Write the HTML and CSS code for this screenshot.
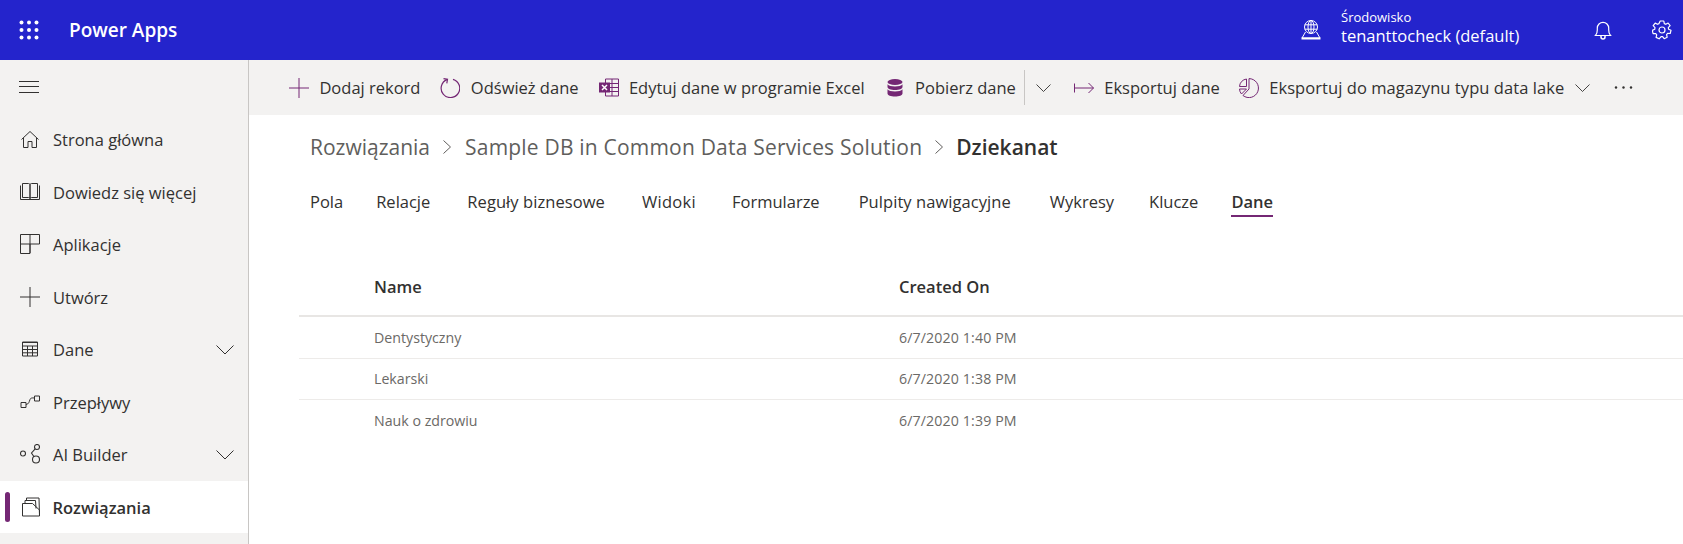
FILE: index.html
```html
<!DOCTYPE html>
<html lang="pl">
<head>
<meta charset="utf-8">
<title>Power Apps</title>
<link rel="stylesheet" href="styles.css">
</head>
<body>
<header class="topbar">
  <svg class="waffle" width="20" height="20" viewBox="0 0 20 20" fill="#fff"><circle cx="2.500" cy="2.500" r="2"/><circle cx="10" cy="2.500" r="2"/><circle cx="17.500" cy="2.500" r="2"/><circle cx="2.500" cy="10" r="2"/><circle cx="10" cy="10" r="2"/><circle cx="17.500" cy="10" r="2"/><circle cx="2.500" cy="17.500" r="2"/><circle cx="10" cy="17.500" r="2"/><circle cx="17.500" cy="17.500" r="2"/></svg>
  <div class="brand">Power Apps</div>
  <svg class="globe" width="20" height="20" viewBox="0 0 20 20" fill="none" stroke="#fff" stroke-width="1"><circle cx="10" cy="7" r="6.500"/><ellipse cx="10" cy="7" rx="3" ry="6.500"/><path d="M3.800 4.800h12.400M3.800 9.200h12.400M10 .5v13"/><path d="M4.500 12 1 18h18l-3.500-6"/><path d="M.5 18.500h19" stroke-width="2"/></svg>
  <div class="env">
    <div class="env-label">Środowisko</div>
    <div class="env-name">tenanttocheck (default)</div>
  </div>
  <svg class="bell" width="18" height="20" viewBox="0 0 18 20" fill="none" stroke="#fff" stroke-width="1.200"><path d="M1.500 15.500c1.400-1.500 1.800-3 1.800-5.500V8a5.700 5.700 0 0 1 11.400 0v2c0 2.500.4 4 1.800 5.500z"/><path d="M7 16v1a2 2 0 0 0 4 0v-1" stroke-width="1.500"/></svg>
  <svg class="gear" width="20" height="20" viewBox="0 0 20 20" fill="none" stroke="#fff" stroke-width="1.200"><circle cx="10" cy="10" r="3"/><path d="M8.200 1h3.600l.5 2.600 1.500.7 2.300-1.300 2 2.600-1.800 2 .3 1.600 2.400 1.100-.8 3.200-2.600-.1-1 1.300.6 2.600-3 1.400-1.600-2.100h-1.500L7.100 18.800l-3-1.400.6-2.600-1-1.300-2.600.1-.8-3.200 2.400-1.100.3-1.600-1.800-2 2-2.600L5.500 4.300 7 3.600z" stroke-linejoin="round"/></svg>
</header>

<div class="shell">
  <nav class="sidebar">
    <div class="hamburger">
      <svg width="20" height="12" viewBox="0 0 20 12" stroke="#323130" stroke-width="1"><path d="M0 .5h20M0 5.500h20M0 11.500h20"/></svg>
    </div>
    <a class="nav-item">
      <svg class="nav-icon" viewBox="0 0 20 20" fill="none" stroke="#323130"><path d="M1.500 10.500 10 2.500l8.500 8M3.500 9v9.500h4.500v-6h4v6h4.500V9"/></svg>
      <span>Strona główna</span>
    </a>
    <a class="nav-item">
      <svg class="nav-icon" viewBox="0 0 20 20" fill="none" stroke="#323130"><path d="M.5 3.500v14h19v-14M2.500 1.500h6c1 0 1.500.5 1.500 1.500v13.500c0-.7-.5-1-1.500-1h-6zM17.500 1.500h-6c-1 0-1.500.5-1.500 1.500v13.500c0-.7.500-1 1.500-1h6z"/></svg>
      <span>Dowiedz się więcej</span>
    </a>
    <a class="nav-item">
      <svg class="nav-icon" viewBox="0 0 20 20" fill="none" stroke="#323130"><path d="M.5.500h19v9.500h-9.500v9.500H.5zM10 .5V19M.5 10H10"/></svg>
      <span>Aplikacje</span>
    </a>
    <a class="nav-item">
      <svg class="nav-icon" viewBox="0 0 20 20" fill="none" stroke="#323130"><path d="M0 10h20M10 0v20"/></svg>
      <span>Utwórz</span>
    </a>
    <a class="nav-item">
      <svg class="nav-icon" viewBox="0 0 20 20" fill="none" stroke="#323130"><path d="M2.500 3h15v14h-15zM2.500 7h15M2.500 10.500h15M2.500 13.800h15M7.500 7v10M12.500 7v10M2.500 3.500h15" /></svg>
      <span>Dane</span>
      <svg class="nav-chev" width="18" height="10" viewBox="0 0 18 10" fill="none" stroke="#323130"><path d="M.5.500 9 9 17.500.5"/></svg>
    </a>
    <a class="nav-item">
      <svg class="nav-icon" viewBox="0 0 20 20" fill="none" stroke="#323130"><path d="M1 10.500h5v5H1zM14.500 4h5v5h-5zM6 12.500c3-.5 3-2.500 4-5 .5-1.500 2-1.800 4.500-1.500"/></svg>
      <span>Przepływy</span>
    </a>
    <a class="nav-item">
      <svg class="nav-icon" viewBox="0 0 20 20" fill="none" stroke="#323130" stroke-width="1.100"><circle cx="3" cy="9.500" r="2.500"/><circle cx="17" cy="3" r="2.500"/><circle cx="16" cy="15.500" r="3.500"/><path d="M15.200 4.800 11.500 9l2.500 3.700"/></svg>
      <span>AI Builder</span>
      <svg class="nav-chev" width="18" height="10" viewBox="0 0 18 10" fill="none" stroke="#323130"><path d="M.5.500 9 9 17.500.5"/></svg>
    </a>
    <a class="nav-item active">
      <svg class="nav-icon" viewBox="0 0 20 20" fill="none" stroke="#323130"><path d="M2.500 6.500h10l7 6.500v6H2.500zM5 6.500V3.500h10.500l.5 8M6.500 3.500V1h12.500l.5 18"/></svg>
      <span>Rozwiązania</span>
    </a>
  </nav>

  <main class="content">
    <div class="commands">
      <div class="cmd">
        <svg class="cmd-icon" viewBox="0 0 20 20" fill="none" stroke="#742774"><path d="M0 10h20M10 0v20"/></svg>
        <span>Dodaj rekord</span>
      </div>
      <div class="cmd">
        <svg class="cmd-icon" viewBox="0 0 20 20" fill="none" stroke="#742774" stroke-width="1.200"><path d="M7 1.600A9.300 9.300 0 1 0 13 1.300"/><path d="M3.500 .6 7.500 1.300 6.800 5.300"/></svg>
        <span>Odśwież dane</span>
      </div>
      <div class="cmd">
        <svg class="cmd-icon" viewBox="0 0 20 20" fill="none"><path d="M6.500 1h13v17h-13z" stroke="#742774"/><path d="M6.500 5.500h13M6.500 9.500h13M6.500 13.500h13M13 1v17" stroke="#742774"/><path d="M0 4.500h11v10H0z" fill="#742774"/><path d="M3 7l5 5M8 7l-5 5" stroke="#fff" stroke-width="1.500"/></svg>
        <span>Edytuj dane w programie Excel</span>
      </div>
      <div class="cmd">
        <svg class="cmd-icon" viewBox="0 0 20 20" fill="#742774"><ellipse cx="10" cy="4" rx="7.500" ry="3"/><path d="M2.500 6.300c1 1.500 4 2.200 7.500 2.200s6.500-.7 7.500-2.200v2.700c0 1.700-3.300 3-7.500 3s-7.500-1.300-7.500-3zM2.500 11.300c1 1.500 4 2.200 7.500 2.200s6.500-.7 7.500-2.200V15.500c0 1.700-3.300 3-7.500 3s-7.500-1.300-7.500-3z"/></svg>
        <span>Pobierz dane</span>
      </div>
      <div class="split">
        <span class="sep"></span>
        <svg width="15" height="8" viewBox="0 0 15 8" fill="none" stroke="#323130" stroke-width=".9"><path d="M.5.500 7.500 7.500 14.500.5"/></svg>
      </div>
      <div class="cmd cmd-export">
        <svg class="cmd-icon" viewBox="0 0 20 20" fill="none" stroke="#742774"><path d="M.5 5.500v9M1 10h18.500M14.500 5l5 5-5 5" /></svg>
        <span>Eksportuj dane</span>
      </div>
      <div class="cmd cmd-lake">
        <svg class="cmd-icon" viewBox="0 0 20 20" fill="none" stroke="#742774"><path d="M10 .6a9.500 9.500 0 1 1-6 16.900l6-6.500z"/><path d="M7.500 1v7.500H.5A8 8 0 0 1 7.500 1zM.5 11h7l-5 5a8 8 0 0 1-2-5z"/></svg>
        <span class="c-lake">Eksportuj do magazynu typu data lake</span>
        <svg width="15" height="8" viewBox="0 0 15 8" fill="none" stroke="#323130" stroke-width=".9"><path d="M.5.500 7.500 7.500 14.500.5"/></svg>
      </div>
      <svg class="more" width="19" height="3" viewBox="0 0 19 3" fill="#323130"><circle cx="2" cy="1.500" r="1.200"/><circle cx="9.500" cy="1.500" r="1.200"/><circle cx="17" cy="1.500" r="1.200"/></svg>
    </div>

    <div class="breadcrumb">
      <span>Rozwiązania</span>
      <svg width="8" height="14" viewBox="0 0 8 14" fill="none" stroke="#605e5c"><path d="M.5.500 7.500 7 .5 13.500"/></svg>
      <span class="b-db">Sample DB in Common Data Services Solution</span>
      <svg width="8" height="14" viewBox="0 0 8 14" fill="none" stroke="#605e5c"><path d="M.5.500 7.500 7 .5 13.500"/></svg>
      <strong class="b-cur">Dziekanat</strong>
    </div>

    <div class="tabs">
      <span class="tab t-pola">Pola</span>
      <span class="tab t-rel">Relacje</span>
      <span class="tab t-reg">Reguły biznesowe</span>
      <span class="tab t-wid">Widoki</span>
      <span class="tab t-for">Formularze</span>
      <span class="tab t-pul">Pulpity nawigacyjne</span>
      <span class="tab t-wyk">Wykresy</span>
      <span class="tab t-klu">Klucze</span>
      <span class="tab active">Dane</span>
    </div>

    <div class="grid">
      <div class="row head"><span class="col-a">Name</span><span>Created On</span></div>
      <div class="row"><span class="col-a">Dentystyczny</span><span class="date">6/7/2020 1:40 PM</span></div>
      <div class="row"><span class="col-a">Lekarski</span><span class="date">6/7/2020 1:38 PM</span></div>
      <div class="row"><span class="col-a">Nauk o zdrowiu</span><span class="date">6/7/2020 1:39 PM</span></div>
    </div>
  </main>
</div>
</body>
</html>
```

FILE: styles.css
```css
* { box-sizing: border-box; }
html, body { margin: 0; height: 100%; overflow: hidden; }
body { font-family: "Open Sans", "Noto Sans", sans-serif; font-size: 16.500px; color: #323130; background: #fff; display: flex; flex-direction: column; }
svg { display: block; flex: none; }

.topbar { height: 60px; flex: none; background: #2424cc; color: #fff; display: flex; align-items: center; padding-left: 19px; }
.waffle { margin-right: 30px; }
.brand { font-size: 19px; font-weight: 600; flex: 1; }
.globe { margin-right: 20px; }
.env { width: 253px; padding-bottom: 6px; }
.env-label { font-size: 13px; line-height: 16px; }
.env-name { font-size: 16.500px; line-height: 21px; }
.bell { margin-right: 40px; }
.gear { margin-right: 11px; }

.shell { flex: 1; display: flex; min-height: 0; }
.sidebar { width: 249px; flex: none; background: #f3f2f1; border-right: 1px solid #c8c6c4; }
.hamburger { height: 53px; padding: 21px 0 0 19px; }
.nav-item { height: 52.500px; display: flex; align-items: center; padding-left: 20px; position: relative; }
.nav-item span { padding-top: 1px; }
.nav-icon { width: 20px; height: 20px; margin-right: 13px; }
.nav-chev { position: absolute; left: 216px; top: 22px; }
.nav-item.active { background: #fff; font-weight: 600; }
.nav-item.active span { margin-left: -.5px; }
.nav-item.active::before { content: ""; position: absolute; left: 5px; top: 11px; width: 5px; height: 30px; border-radius: 3px; background: #742774; }

.content { flex: 1; min-width: 0; }
.commands { height: 55px; background: #f3f2f1; display: flex; align-items: center; padding-left: 40px; gap: 20px; }
.cmd { display: flex; align-items: center; gap: 10.400px; white-space: nowrap; }
.cmd-icon { width: 20px; height: 20px; }
.cmd-export { margin-left: 3px; }
.cmd-lake { margin-left: -1px; }
.c-lake { letter-spacing: .06px; }
.split { display: flex; align-items: center; gap: 11px; margin-left: -12px; }
.sep { width: 1px; height: 35px; background: #c8c6c4; }
.more { margin-left: 4px; }

.breadcrumb { display: flex; align-items: center; gap: 13px; padding: 2px 0 0 61px; height: 61px; font-size: 21px; color: #605e5c; white-space: nowrap; }
.b-db { letter-spacing: .2px; margin-left: 1px; }
.b-cur { font-weight: 600; color: #323130; }

.tabs { display: flex; padding-left: 61px; margin-top: 10px; height: 38px; white-space: nowrap; }
.tab { height: 31px; padding-top: 1px; line-height: 30px; margin-right: 36px; }
.tab.active { font-weight: 600; border-bottom: 2px solid #742774; }
.t-pola { margin-right: 33px; }
.t-rel { margin-right: 37px; }
.t-reg { margin-right: 37px; letter-spacing: .07px; }
.t-wid { letter-spacing: .3px; }
.t-for { margin-right: 39px; }
.t-pul { margin-right: 39px; letter-spacing: .06px; }
.t-wyk { margin-right: 35px; }
.t-klu { margin-right: 33px; }

.grid { margin: 37px 0 0 50px; }
.row { display: flex; height: 41.500px; align-items: center; padding-left: 75px; border-bottom: 1px solid #edebe9; font-size: 14.200px; color: #6b6966; }
.row:last-child { border-bottom: 0; }
.row.head { height: 56px; padding-bottom: 4px; border-bottom: 2px solid #e8e6e4; font-size: 16.500px; font-weight: 600; color: #323130; }
.col-a { width: 525px; }
.date { letter-spacing: .12px; }
```
